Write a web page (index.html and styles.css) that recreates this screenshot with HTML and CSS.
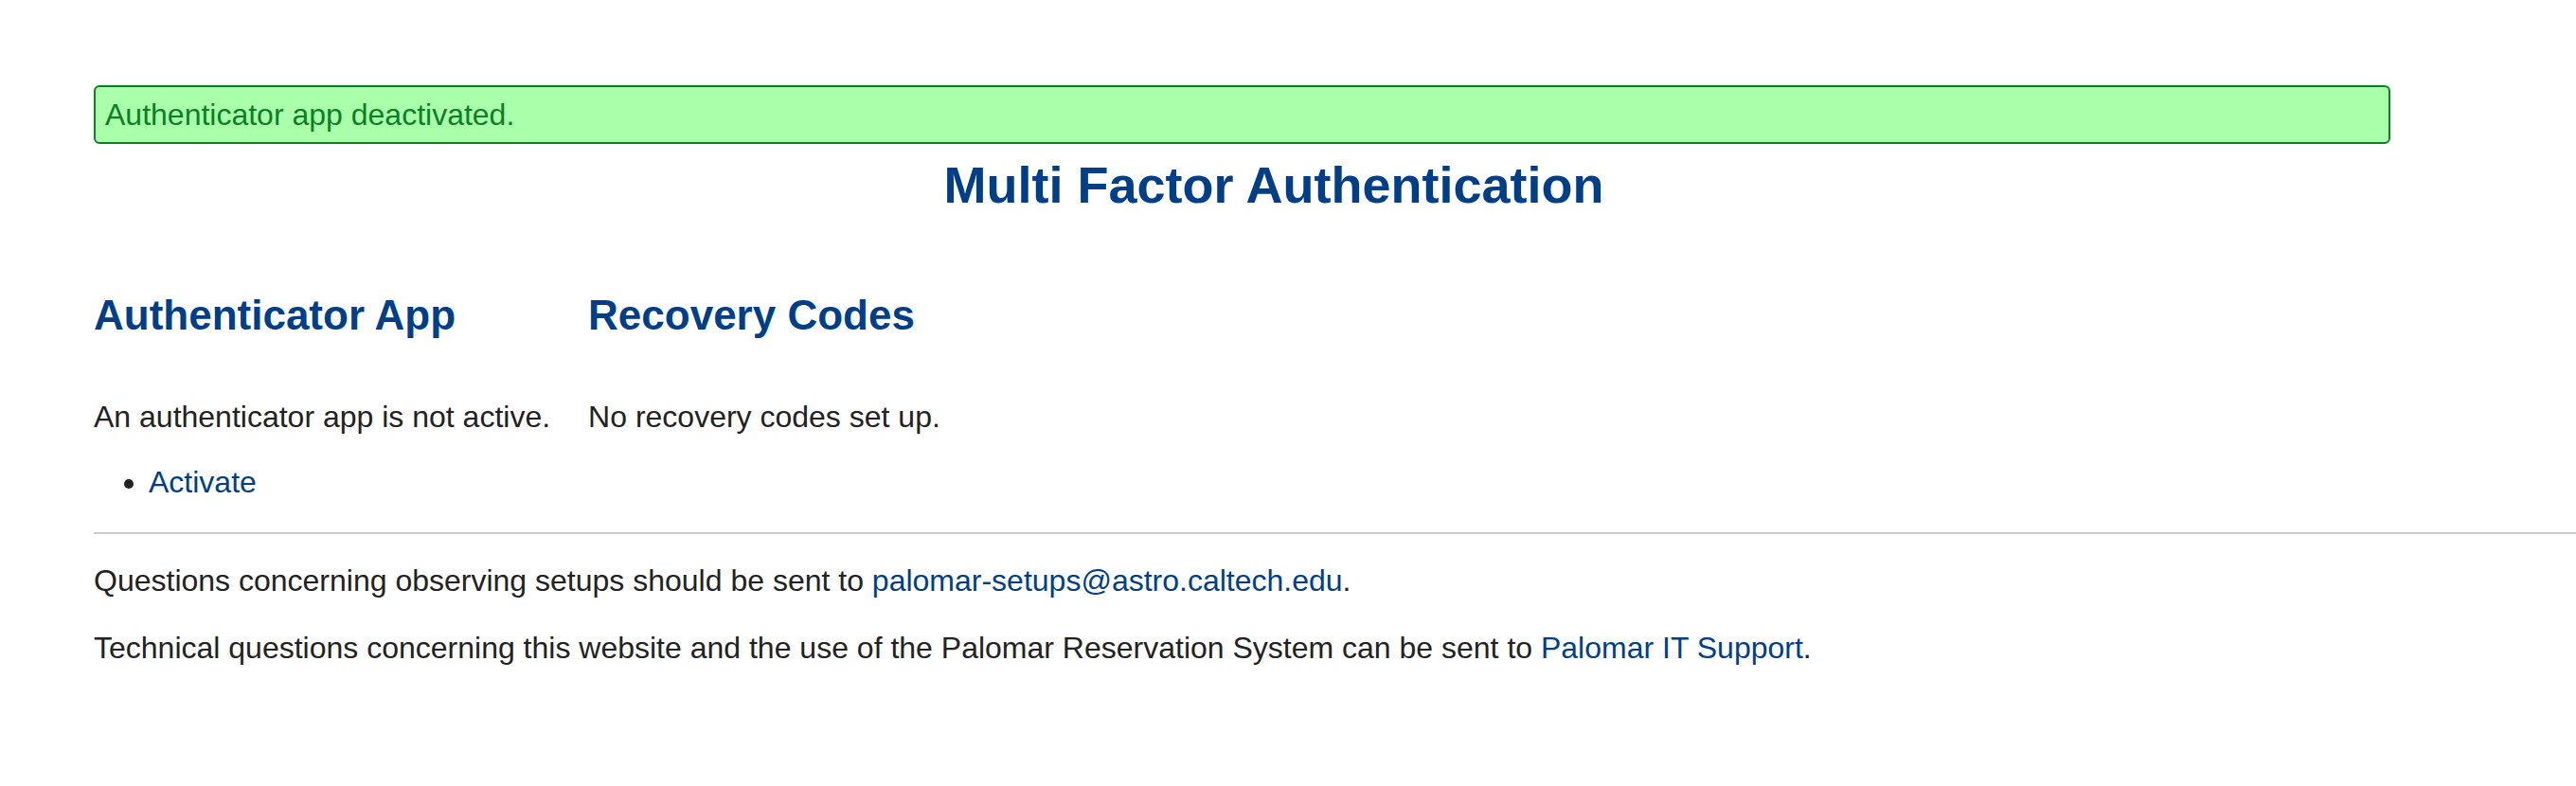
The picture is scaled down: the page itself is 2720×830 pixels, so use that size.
FILE: index.html
```html
<!DOCTYPE html>
<html lang="en">
<head>
<meta charset="utf-8">
<title>Multi Factor Authentication</title>
<link rel="stylesheet" href="styles.css">
</head>
<body>
<main class="page">
  <div class="alert">Authenticator app deactivated.</div>
  <h1 class="title">Multi Factor Authentication</h1>
  <div class="columns">
    <section class="col">
      <h2 class="col-title">Authenticator App</h2>
      <p class="text">An authenticator app is not active.</p>
      <ul class="actions">
        <li><a class="link" href="#">Activate</a></li>
      </ul>
    </section>
    <section class="col">
      <h2 class="col-title">Recovery Codes</h2>
      <p class="text">No recovery codes set up.</p>
    </section>
  </div>
  <hr class="rule">
  <footer class="footer">
    <p class="text">Questions concerning observing setups should be sent to <a class="link" href="#">palomar-setups@astro.caltech.edu</a>.</p>
    <p class="text">Technical questions concerning this website and the use of the Palomar Reservation System can be sent to <a class="link" href="#">Palomar IT Support</a>.</p>
  </footer>
</main>
</body>
</html>
```
FILE: styles.css
```css
html, body {
  margin: 0;
  padding: 0;
  background: #ffffff;
}

body {
  font-family: "Liberation Sans", Arial, Helvetica, sans-serif;
  color: #222222;
  font-size: 32px;
  line-height: 37px;
}

.page {
  padding: 90px 129px 40px 99px;
}

.alert {
  margin: 0 67px 0 0;
  padding: 10px 10px;
  background: #aaffaa;
  border: 2px solid #0b801f;
  border-radius: 6px;
  color: #0b7f25;
  font-size: 32px;
  line-height: 38px;
}

.title {
  margin: 13px 0 0;
  text-align: center;
  color: #003f87;
  font-size: 54px;
  line-height: 60px;
  font-weight: bold;
}

.columns {
  display: flex;
  gap: 40px;
  margin-top: 83px;
}

.col-title {
  margin: 0 0 64px;
  color: #003f87;
  font-size: 44px;
  line-height: 50px;
  font-weight: bold;
}

.text {
  margin: 0 0 32px;
}

.actions {
  margin: 0;
  padding-left: 58px;
}

.link {
  color: #003f87;
  text-decoration: none;
}

.rule {
  margin: 34px -129px 0 0;
  border: 0;
  border-top: 2px solid #cccccc;
  height: 0;
}

.footer {
  padding-top: 31px;
}

.footer .text {
  margin-bottom: 34px;
}

.footer .text:last-child {
  margin-bottom: 0;
}
```
